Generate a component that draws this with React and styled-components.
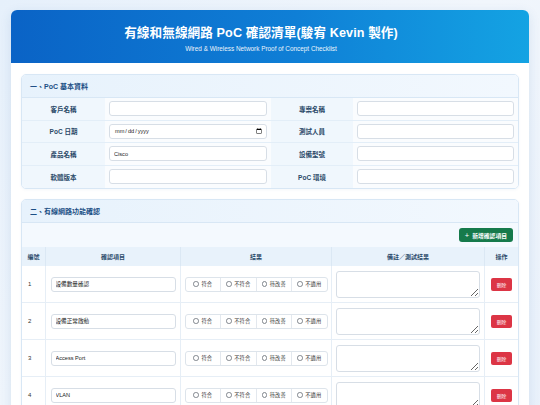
import React from 'react';
import styled, { createGlobalStyle } from 'styled-components';

const GlobalStyle = createGlobalStyle`
  html, body {
    margin: 0;
    padding: 0;
  }
  body {
    background: linear-gradient(135deg, #e6f0fb 0%, #f1f6fc 50%, #e9f1fb 100%);
    font-family: "Liberation Sans", "Noto Sans CJK TC", sans-serif;
    color: #333;
    min-height: 405px;
    overflow: hidden;
  }
`;

const Page = styled.div`
  padding: 10px 11px;
`;

const Sheet = styled.div`
  background: #fff;
  border-radius: 6px;
  box-shadow: 0 3px 12px rgba(30, 90, 160, 0.12);
  overflow: hidden;
`;

const Banner = styled.header`
  height: 53px;
  box-sizing: border-box;
  padding: 16px 18px 0 0;
  background: linear-gradient(90deg, #0a63c6 0%, #0f7fd6 55%, #14a3e3 100%);
  color: #fff;
  text-align: center;
`;

const Title = styled.h1`
  margin: 0;
  font-size: 12.6px;
  font-weight: 700;
  line-height: 15px;
  letter-spacing: 0.1px;
`;

const Subtitle = styled.div`
  margin-top: 4px;
  font-size: 6.4px;
  line-height: 8px;
  opacity: 0.92;
`;

const Body = styled.div`
  padding: 11px 10px 10px;
  display: flex;
  flex-direction: column;
  gap: 10px;
`;

const Section = styled.section`
  border: 1px solid #d8e7f5;
  border-radius: 5px;
  overflow: hidden;
  background: #fff;
  box-shadow: 0 1px 3px rgba(30, 90, 160, 0.05);
`;

const SectionHead = styled.div`
  height: 22px;
  display: flex;
  align-items: center;
  padding: 0 8px;
  background: linear-gradient(90deg, #e7f2fc 0%, #f2f8fe 100%);
  border-bottom: 1px solid #d8e7f5;
  font-size: 7px;
  font-weight: 700;
  color: #1b4f85;
`;

const InfoGrid = styled.div`
  display: grid;
  grid-template-columns: 83px 166px 82px 1fr;
  grid-auto-rows: 22.5px;
`;

const Label = styled.div`
  box-sizing: border-box;
  display: flex;
  align-items: center;
  justify-content: center;
  background: #f0f7fd;
  font-size: 6.5px;
  font-weight: 700;
  color: #2a4968;
  border-bottom: ${(p) => (p.$last ? 'none' : '1px solid #e3eef8')};
`;

const Field = styled.div`
  box-sizing: border-box;
  display: flex;
  align-items: center;
  padding: 0 4px;
  background: #fafcfe;
  border-bottom: ${(p) => (p.$last ? 'none' : '1px solid #e3eef8')};
`;

const TextInput = styled.input`
  box-sizing: border-box;
  width: ${(p) => p.$w || '100%'};
  height: 15px;
  padding: 0 4px;
  border: 1px solid #d7dee6;
  border-radius: 3px;
  background: #fff;
  font-family: "Liberation Sans", "Noto Sans CJK TC", sans-serif;
  font-size: 5.6px;
  color: #222;
  outline: none;

  &::-webkit-datetime-edit-text {
    padding: 0;
  }
  &::-webkit-calendar-picker-indicator {
    width: 6px;
    height: 6px;
    padding: 0;
    margin: 0;
  }
`;

const Toolbar = styled.div`
  height: 24px;
  display: flex;
  align-items: center;
  justify-content: flex-end;
  padding: 0 5px;
  background: #f4f9fe;
`;

const AddButton = styled.button`
  height: 14px;
  padding: 0 6px;
  border: none;
  border-radius: 3px;
  background: #167a4b;
  color: #fff;
  font-family: "Liberation Sans", "Noto Sans CJK TC", sans-serif;
  font-size: 5.8px;
  font-weight: 700;
  display: flex;
  align-items: center;
  gap: 3px;

  span {
    font-size: 7.5px;
    font-weight: 400;
  }
`;

const Table = styled.div`
  display: grid;
  grid-template-columns: 24px 135px 151px 153px 1fr;
`;

const Th = styled.div`
  height: 19px;
  display: flex;
  align-items: center;
  justify-content: center;
  background: #e8f2fb;
  border-right: ${(p) => (p.$end ? 'none' : '1px solid #dbe8f4')};
  font-size: 6px;
  font-weight: 700;
  color: #2b4a6a;
`;

const Td = styled.div`
  height: 37px;
  box-sizing: border-box;
  display: flex;
  align-items: center;
  justify-content: ${(p) => p.$justify || 'center'};
  padding: ${(p) => p.$pad || '0'};
  border-bottom: 1px solid #e6eef6;
  border-right: ${(p) => (p.$end ? 'none' : '1px solid #e6eef6')};
  font-size: 6px;
  color: #333;
`;

const RadioGroup = styled.div`
  display: flex;
  width: 143px;
  height: 15px;
  box-sizing: border-box;
  border: 1px solid #dde4eb;
  border-radius: 3px;
  background: #fff;
`;

const RadioOption = styled.label`
  flex: 1;
  display: flex;
  align-items: center;
  justify-content: center;
  gap: 2.5px;
  font-size: 5.3px;
  color: #3a3a3a;
  border-right: ${(p) => (p.$end ? 'none' : '1px solid #e3e8ee')};

  input {
    appearance: none;
    margin: 0;
    width: 5.5px;
    height: 5.5px;
    box-sizing: border-box;
    border: 0.7px solid #80868d;
    border-radius: 50%;
    background: #fff;
  }
`;

const Note = styled.textarea`
  box-sizing: border-box;
  width: 144px;
  height: 27px;
  border: 1px solid #d7dee6;
  border-radius: 3px;
  background: #fff;
  resize: vertical;
  outline: none;
  font-size: 5.6px;
`;

const DeleteButton = styled.button`
  width: 21px;
  height: 13px;
  padding: 0;
  border: none;
  border-radius: 2px;
  background: #dc3545;
  color: #fff;
  font-family: "Liberation Sans", "Noto Sans CJK TC", sans-serif;
  font-size: 4.8px;
`;

const infoRows = [
  ['客戶名稱', '', '專案名稱', ''],
  ['PoC 日期', 'date', '測試人員', ''],
  ['產品名稱', 'Cisco', '設備型號', ''],
  ['軟體版本', '', 'PoC 環境', ''],
];

const items = ['設備數量確認', '設備正常啟動', 'Access Port', 'VLAN'];
const results = ['符合', '不符合', '待改善', '不適用'];

export default function App() {
  return (
    <>
      <GlobalStyle />
      <Page>
        <Sheet>
          <Banner>
            <Title>有線和無線網路 PoC 確認清單(駿宥 Kevin 製作)</Title>
            <Subtitle>Wired &amp; Wireless Network Proof of Concept Checklist</Subtitle>
          </Banner>
          <Body>
            <Section>
              <SectionHead>一、PoC 基本資料</SectionHead>
              <InfoGrid>
                {infoRows.map(([l1, v1, l2, v2], i) => {
                  const last = i === infoRows.length - 1;
                  return (
                    <React.Fragment key={l1}>
                      <Label $last={last}>{l1}</Label>
                      <Field $last={last}>
                        {v1 === 'date' ? (
                          <TextInput type="date" />
                        ) : (
                          <TextInput defaultValue={v1} />
                        )}
                      </Field>
                      <Label $last={last}>{l2}</Label>
                      <Field $last={last}>
                        <TextInput defaultValue={v2} />
                      </Field>
                    </React.Fragment>
                  );
                })}
              </InfoGrid>
            </Section>

            <Section>
              <SectionHead>二、有線網路功能確認</SectionHead>
              <Toolbar>
                <AddButton>
                  <span>+</span> 新增確認項目
                </AddButton>
              </Toolbar>
              <Table>
                <Th>編號</Th>
                <Th>確認項目</Th>
                <Th>結果</Th>
                <Th>備註／測試結果</Th>
                <Th $end>操作</Th>
                {items.map((item, i) => (
                  <React.Fragment key={item}>
                    <Td $justify="flex-start" $pad="0 0 0 6px">{i + 1}</Td>
                    <Td>
                      <TextInput $w="125px" defaultValue={item} />
                    </Td>
                    <Td>
                      <RadioGroup>
                        {results.map((r, j) => (
                          <RadioOption key={r} $end={j === results.length - 1}>
                            <input type="radio" name={`r${i}`} />
                            {r}
                          </RadioOption>
                        ))}
                      </RadioGroup>
                    </Td>
                    <Td>
                      <Note />
                    </Td>
                    <Td $end>
                      <DeleteButton>刪除</DeleteButton>
                    </Td>
                  </React.Fragment>
                ))}
              </Table>
            </Section>
          </Body>
        </Sheet>
      </Page>
    </>
  );
}
